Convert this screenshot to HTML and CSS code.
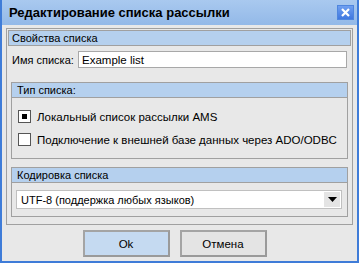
FILE: index.html
```html
<!DOCTYPE html>
<html lang="ru">
<head>
    <meta charset="UTF-8">
    <title>Редактирование списка рассылки</title>
    <link rel="stylesheet" href="styles.css">
</head>
<body>
<div class="window">
    <div class="titlebar">
        <span class="title">Редактирование списка рассылки</span>
        <span class="close">
            <svg width="9" height="9" viewBox="0 0 9 9"><path d="M1 1 L8 8 M8 1 L1 8" stroke="#fff" stroke-width="2.2"/></svg>
        </span>
    </div>
    <div class="frame">
        <div class="frame-head">Свойства списка</div>
        <div class="name-row">
            <label class="label">Имя списка:</label>
            <input class="input" type="text" value="Example list">
        </div>
        <div class="group">
            <div class="group-head">Тип списка:</div>
            <div class="options">
                <div class="option"><span class="check on"></span><span class="option-text">Локальный список рассылки AMS</span></div>
                <div class="option"><span class="check"></span><span class="option-text">Подключение к внешней базе данных через ADO/ODBC</span></div>
            </div>
        </div>
        <div class="group">
            <div class="group-head">Кодировка списка</div>
            <div class="group-body">
                <div class="select">
                    <span class="select-text">UTF-8 (поддержка любых языков)</span>
                    <span class="select-arrow"><svg width="9" height="5" viewBox="0 0 9 5"><path d="M0 0 H9 L4.5 5 Z" fill="#000"/></svg></span>
                </div>
            </div>
        </div>
    </div>
    <div class="buttons">
        <button class="btn default">Ok</button>
        <button class="btn">Отмена</button>
    </div>
</div>
</body>
</html>
```

FILE: styles.css
```css
body {
    margin: 0;
    font-family: "Liberation Sans", Arial, sans-serif;
    font-size: 11px;
    color: #000;
    background: #fff;
}

.window {
    width: 359px;
    height: 263px;
    box-sizing: border-box;
    border: 2px solid #3f7cd8;
    border-top: 0;
    background: #e8e8e8;
}

.titlebar {
    height: 25px;
    display: flex;
    align-items: center;
    justify-content: space-between;
    padding: 0 3px 0 7px;
    background: linear-gradient(#a9c9ef, #93b9e8);
}

.title {
    font-weight: bold;
    font-size: 13px;
    color: #000;
}

.close {
    width: 17px;
    height: 15px;
    display: flex;
    align-items: center;
    justify-content: center;
    background: linear-gradient(#6f9ff0, #3f78e0);
    border: 1px solid #4f86de;
    box-sizing: border-box;
}

.frame {
    margin: 3px 4px 0;
    border: 1px solid #a0a0a0;
    padding: 1px 4px 7px;
}

.frame-head {
    height: 14px;
    line-height: 14px;
    margin: 0 -3px;
    padding-left: 3px;
    background: #b5d0ee;
    border: 1px solid #a0a0a0;
}

.name-row {
    display: flex;
    align-items: center;
    padding: 5px 0 0 1px;
    margin-bottom: 14px;
}

.label {
    width: 66px;
}

.input {
    width: 269px;
    height: 17px;
    box-sizing: border-box;
    border: 1px solid #a8a8a8;
    padding: 0 3px;
    font-family: inherit;
    font-size: 11.5px;
    background: #fff;
}

.group {
    border: 1px solid #a0a0a0;
    margin-bottom: 8px;
}

.group:last-child {
    margin-bottom: 0;
}

.group-head {
    height: 14px;
    line-height: 14px;
    padding-left: 5px;
    background: #b5d0ee;
    border-bottom: 1px solid #a0a0a0;
}

.group-body {
    padding: 7px 5px 7px 4px;
}

.options {
    padding: 12px 6px 12px;
    display: flex;
    flex-direction: column;
    gap: 10px;
    font-size: 11.5px;
}

.option {
    display: flex;
    align-items: center;
    gap: 6px;
    height: 13px;
}

.option-text {
    white-space: nowrap;
}

.check {
    flex: none;
    width: 13px;
    height: 13px;
    box-sizing: border-box;
    border: 1px solid #555;
    background: #fff;
    display: flex;
    align-items: center;
    justify-content: center;
}

.check.on::after {
    content: "";
    width: 5px;
    height: 5px;
    background: #000;
}

.select {
    display: flex;
    align-items: center;
    height: 19px;
    box-sizing: border-box;
    border: 1px solid #c0c0c0;
    background: #fff;
}

.select-text {
    flex: 1;
    padding-left: 4px;
}

.select-arrow {
    width: 16px;
    height: 15px;
    margin-right: 1px;
    display: flex;
    align-items: center;
    justify-content: center;
    background: #e4e4e4;
}

.buttons {
    display: flex;
    justify-content: center;
    gap: 10px;
    padding: 5px 10px 0 0;
}

.btn {
    width: 87px;
    height: 27px;
    font-family: inherit;
    font-size: 11.5px;
    color: #000;
    background: #e4e4e4;
    border: 2px solid #a4a4a4;
    border-right-color: #9a9a9a;
    border-bottom-color: #9a9a9a;
}

.btn.default {
    background: #c5daf1;
}
```
